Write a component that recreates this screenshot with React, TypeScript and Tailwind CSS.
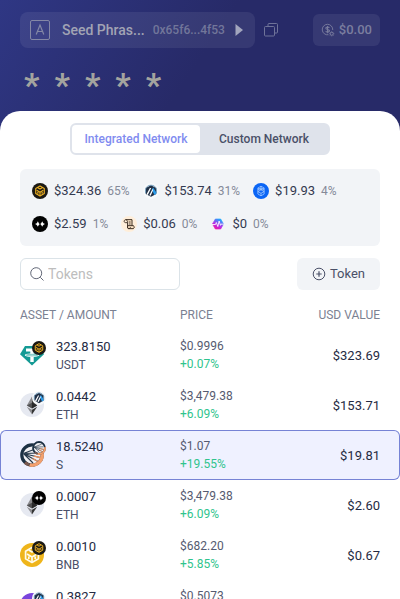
import { useState } from "react";
import type { ReactNode } from "react";
import clsx from "clsx";

type Chain = "bnb" | "arb" | "fantom" | "sonic" | "scroll" | "pulse";
type Coin = "usdt" | "eth" | "s" | "bnb" | "pol";

interface Token {
  amount: string;
  symbol: string;
  price: string;
  change: string;
  value: string;
  coin: Coin;
  chain: Chain | "s";
}

const networks: { chain: Chain; value: string; share: string }[] = [
  { chain: "bnb", value: "$324.36", share: "65%" },
  { chain: "arb", value: "$153.74", share: "31%" },
  { chain: "fantom", value: "$19.93", share: "4%" },
  { chain: "sonic", value: "$2.59", share: "1%" },
  { chain: "scroll", value: "$0.06", share: "0%" },
  { chain: "pulse", value: "$0", share: "0%" },
];

const tokens: Token[] = [
  { amount: "323.8150", symbol: "USDT", price: "$0.9996", change: "+0.07%", value: "$323.69", coin: "usdt", chain: "bnb" },
  { amount: "0.0442", symbol: "ETH", price: "$3,479.38", change: "+6.09%", value: "$153.71", coin: "eth", chain: "arb" },
  { amount: "18.5240", symbol: "S", price: "$1.07", change: "+19.55%", value: "$19.81", coin: "s", chain: "s" },
  { amount: "0.0007", symbol: "ETH", price: "$3,479.38", change: "+6.09%", value: "$2.60", coin: "eth", chain: "sonic" },
  { amount: "0.0010", symbol: "BNB", price: "$682.20", change: "+5.85%", value: "$0.67", coin: "bnb", chain: "bnb" },
  { amount: "0.3827", symbol: "POL", price: "$0.5073", change: "+4.12%", value: "$0.19", coin: "pol", chain: "arb" },
];

const BnbCube = () => (
  <g fill="none" strokeLinejoin="round" strokeWidth="1.7">
    <path d="M12 4.6 18.4 8.2v7.6L12 19.4 5.6 15.8V8.2z" />
    <path d="m8.8 7 3.2 1.9L15.2 7M7 11l5 3 5-3M12 13.8v5M8.8 16v-2.6M15.2 16v-2.6" />
  </g>
);

// Ring with spokes fanning out of its left side, shared by the S coin and its network badge
const SpokedRing = () => (
  <>
    <circle cx="12" cy="12" r="11" fill="#f1f0f3" />
    <circle cx="12" cy="12" r="10.200" fill="none" stroke="#1d3144" strokeWidth="3.200" />
    <path d="M22.100 10.500A10.200 10.200 0 0 1 9.500 21.900" fill="none" stroke="#f3a06e" strokeWidth="3.400" />
    <path d="M9 21.800A10.200 10.200 0 0 1 5 19.500" fill="none" stroke="#7b5a50" strokeWidth="3.200" />
    <path d="M3.500 10.500 20 14.500M3.500 10.500l14.500 8M3.500 10.500 13 20M3.500 10.500 19.500 10M3.500 10.500l13-5" fill="none" stroke="#26384a" strokeWidth="1.100" />
    <path d="M14 13.100 20 14.500M12.500 15.500l5.500 3" stroke="#e9925f" strokeWidth="1.400" />
  </>
);

const shapes: Record<Chain | Coin, ReactNode> = {
  usdt: (
    <>
      <path d="M5 3h14l5 8.200L12 22.500 0 11.200z" fill="#149a94" />
      <path d="M6 5.500h12v3h-4.300v2c3.200.2 5.500.9 5.500 1.700s-2.300 1.500-5.500 1.700V19h-3.400v-5.100c-3.200-.2-5.500-.9-5.500-1.700s2.300-1.500 5.500-1.700v-2H6z" fill="#fff" />
      <ellipse cx="12" cy="12.100" rx="5.700" ry=".8" fill="none" stroke="#149a94" strokeWidth=".6" />
    </>
  ),
  eth: (
    <>
      <circle cx="12" cy="12" r="12" fill="#e6e9f1" />
      <path d="M12 3.500v12L6.800 12.400z" fill="#8a8a8d" />
      <path d="M12 3.500v12l5.200-3.100z" fill="#343434" />
      <path d="m12 9.800 5.200 2.600L12 15.500l-5.200-3.100z" fill="#202023" opacity=".55" />
      <path d="M6.800 13.700 12 16.700v4.800z" fill="#8a8a8d" />
      <path d="M17.200 13.700 12 16.700v4.800z" fill="#343434" />
    </>
  ),
  s: <SpokedRing />,
  bnb: (
    <>
      <circle cx="12" cy="12" r="12" fill="#1b1914" />
      <g stroke="#eeb122"><BnbCube /></g>
    </>
  ),
  pol: (
    <>
      <circle cx="12" cy="12" r="12" fill="#7a45dc" />
      <path d="m8 9 4-2 4 2v5l-4 2-4-2z" fill="none" stroke="#fff" strokeWidth="1.800" />
    </>
  ),
  arb: (
    <>
      <circle cx="12" cy="12" r="12" fill="#f7f9fb" />
      <path d="M12 3.200 19.800 7.600v8.800L12 20.800l-7.800-4.400V7.600z" fill="#213147" />
      <path d="m13.200 10 2-3.300 4.600 7.300v2.600l-2.600 1.500z" fill="#2b9ceb" />
      <path d="M10.300 7.500h2L7.200 18l-2-1.200zM14.200 9l.9 1.900L11.500 19l-2-.8z" fill="#fff" />
      <path d="M3.900 15.500V9.500C4.500 5.500 8 3.300 12 3.300s7.500 2.200 8.100 6.200v6" fill="none" stroke="#5f91b5" strokeWidth="1.200" />
    </>
  ),
  fantom: (
    <>
      <circle cx="12" cy="12" r="12" fill="#0b65f5" />
      <path d="m12 4.800 4.700 2.700v9L12 19.200l-4.700-2.700v-9zM7.300 7.500l4.700 2.700 4.700-2.700M7.300 12.800l4.700-2.600 4.700 2.600-4.700 2.700zM12 4.800v5.400m0 5.300v3.700M7.300 10.200 12 7.500l4.700 2.700" fill="none" stroke="#b9d6ff" strokeWidth="1" strokeLinejoin="round" />
    </>
  ),
  sonic: (
    <>
      <circle cx="12" cy="12" r="12" fill="#020202" />
      <path d="M3.800 12c2.800-.5 4.200-1.700 5-4.200 1.100 2.500 1.700 3.700 3 4.200-1.300.7-1.900 1.700-3 4.200-.8-2.500-2.200-3.600-5-4.200zM20.200 12c-2.800-.5-3.900-1.700-5-4.200-.8 2.500-1.700 3.700-3.400 4.200 1.700.6 2.600 1.700 3.400 4.200 1.100-2.500 2.200-3.600 5-4.200z" fill="#fff" />
    </>
  ),
  scroll: (
    <>
      <circle cx="12" cy="12" r="12" fill="#ffeeda" />
      <path d="M7 5.500h9.500v9H9.800v2.200c0 2.300 1.300 2.300 2.200 2.300h6.500c1.800-1 1.800-3.600 0-4.500h-2" fill="#ffe6c8" stroke="#3d2e22" strokeWidth="1.500" strokeLinejoin="round" />
      <path d="M7 5.500c-3 .5-3 4.500 0 4.500h2.800v7c0 1.300 1 2 2.200 2s2.200-.8 2.200-2.200M7 5.500c1.600 0 2.800 1.200 2.800 4.500M11.500 9h3M11.500 12h3" fill="none" stroke="#3d2e22" strokeWidth="1.400" />
    </>
  ),
  pulse: (
    <>
      <defs>
        <linearGradient id="pulse" x1="0" y1="1" x2=".6" y2="0">
          <stop offset="0" stopColor="#ff0f8f" />
          <stop offset=".5" stopColor="#b62be8" />
          <stop offset="1" stopColor="#1fa8ff" />
        </linearGradient>
      </defs>
      <path d="M8 4.500h8l4.300 7.500-4.300 7.500H8L3.700 12z" fill="url(#pulse)" stroke="url(#pulse)" strokeLinejoin="round" />
      <path d="M3 12.800h5.200l1.300-3 2.200 6 2-8.300 2 6.500.9-1.800H21" fill="none" stroke="#fff" strokeWidth="1.300" />
    </>
  ),
};

const Glyph = ({ name, className }: { name: Chain | Coin; className: string }) => (
  <svg viewBox="0 0 24 24" className={className} aria-hidden="true">
    {shapes[name]}
  </svg>
);

const CoinIcon = ({ coin, chain }: { coin: Coin; chain: Chain | "s" }) => (
  <span className="relative block size-6 shrink-0">
    {coin === "bnb" ? (
      <svg viewBox="0 0 24 24" className="size-6" aria-hidden="true">
        <circle cx="12" cy="12" r="12" fill="#efb51b" />
        <g stroke="#fffbe9"><BnbCube /></g>
      </svg>
    ) : (
      <Glyph name={coin} className="size-6" />
    )}
    <Glyph name={chain} className="absolute -right-0.5 -top-0.5 size-3.5" />
  </span>
);

const tabs = ["Integrated Network", "Custom Network"];

export default function App() {
  const [tab, setTab] = useState(tabs[0]);
  const [search, setSearch] = useState("");
  const [selected, setSelected] = useState(2);

  const visible = tokens.filter((t) => t.symbol.toLowerCase().includes(search.toLowerCase()));

  return (
    <div className="flex h-screen flex-col overflow-hidden bg-linear-to-br from-[#2f3784] to-[#272a68] to-30% font-[Roboto,sans-serif]">
      {/* Account header */}
      <header className="px-5 pt-3">
        <div className="flex items-center">
          <button className="flex h-9 items-center rounded-lg bg-white/7 pl-2.5 pr-3">
            <svg viewBox="0 0 20 20" className="size-5" fill="none" stroke="#8488a6" aria-hidden="true">
              <rect x="0.500" y="0.500" width="19" height="19" rx="1.500" />
              <path d="m6.200 14.500 3.800-9.500 3.800 9.500M7.500 11.500h5" strokeWidth="1.200" />
            </svg>
            <span className="ml-3 text-sm font-medium text-[#a2a4b4]">Seed Phras...</span>
            <span className="ml-2 text-xs font-medium text-[#72769a]">0x65f6...4f53</span>
            <svg viewBox="0 0 8 12" className="ml-2.5 h-3 w-2" aria-hidden="true">
              <path d="M0.500 0 8 6l-7.500 6z" fill="#a2a5bd" />
            </svg>
          </button>
          <button aria-label="Copy address" className="ml-2 p-px">
            <svg viewBox="0 0 14 14" className="size-3.5" fill="none" stroke="#6f7399" aria-hidden="true">
              <rect x="0.500" y="3.500" width="10" height="9.500" rx="1" />
              <path d="M4 3.500V1.500a1 1 0 0 1 1-1h7.500a1 1 0 0 1 1 1V9a1 1 0 0 1-1 1h-2" />
            </svg>
          </button>
          <button className="ml-auto flex h-8 items-center gap-1 rounded-md bg-white/7 px-2 text-[#7b7e9f]">
            <svg viewBox="0 0 16 16" className="size-3.5" fill="none" stroke="currentColor" aria-hidden="true">
              <path d="M8.500 13.400A6 6 0 1 1 13.400 8" />
              <path d="M9.600 5.600C9.300 4.900 8.500 4.600 7.500 4.600c-1.200 0-2 .6-2 1.400 0 2 4.200.9 4.200 3 0 .9-.9 1.500-2.100 1.500-1.100 0-1.900-.4-2.200-1.200M7.500 3.400v8.300" strokeWidth="1.200" />
              <circle cx="12.300" cy="12.300" r="1.700" />
              <path d="M12.300 9.500v1M12.300 14.200v1M9.500 12.300h1M14.200 12.300h1M10.400 10.400l.6.6M13.600 13.600l.6.6M14.200 10.400l-.6.6M11 13.600l-.6.6" />
            </svg>
            <span className="text-[13px] font-medium">$0.00</span>
          </button>
        </div>
        <div className="mt-3 flex h-[51px] items-start gap-[15px] pl-1 text-[34px] font-bold leading-[51px] text-[#a4a49f]">
          {[0, 1, 2, 3, 4].map((i) => (
            <span key={i}>*</span>
          ))}
        </div>
      </header>

      <main className="min-h-0 flex-1 overflow-hidden rounded-t-[20px] bg-white pt-3">
        <div className="mx-auto flex h-8 w-[260px] rounded-md border-2 border-[#dfe3eb] bg-[#dfe3eb]">
          {tabs.map((t) => (
            <button
              key={t}
              onClick={() => setTab(t)}
              className={clsx(
                "flex-1 whitespace-nowrap rounded text-xs font-medium",
                tab === t ? "bg-white text-[#818cf0]" : "text-[#4a5068]"
              )}
            >
              {t}
            </button>
          ))}
        </div>

        {/* Network totals */}
        <div className="mx-5 mt-3.5 flex flex-wrap gap-x-[13px] gap-y-[17px] rounded-md bg-[#f2f4f7] px-3 py-3.5">
          {networks.map((n) => (
            <div key={n.chain} className="flex h-4 items-center">
              <Glyph name={n.chain} className="size-4" />
              <span className="ml-1.5 text-[13px] text-[#343a50]">{n.value}</span>
              <span className="ml-1.5 text-xs text-[#858a99]">{n.share}</span>
            </div>
          ))}
        </div>

        <div className="mx-5 mt-3 flex items-center justify-between">
          <label className="flex h-8 w-40 items-center rounded-md border border-[#dbe3e8] pl-[9px]">
            <svg viewBox="0 0 14 14" className="size-3.5 shrink-0" fill="none" stroke="#636878" aria-hidden="true">
              <circle cx="6.200" cy="6.200" r="5.500" />
              <path d="m10.300 10.300 3.200 3.200" />
            </svg>
            <input
              aria-label="Search tokens"
              value={search}
              onChange={(e) => setSearch(e.target.value)}
              placeholder="Tokens"
              className="ml-1 w-full min-w-0 bg-transparent text-sm text-[#343a50] outline-none placeholder:text-[#bdbdbd]"
            />
          </label>
          <button className="flex h-8 items-center gap-1 rounded-md bg-[#f2f4f7] px-[15px] text-[13px] text-[#4a5068]">
            <svg viewBox="0 0 14 14" className="size-3.5" fill="none" stroke="currentColor" aria-hidden="true">
              <circle cx="7" cy="7" r="5.800" />
              <path d="M7 4.300v5.400M4.300 7h5.400" strokeWidth="1.200" />
            </svg>
            Token
          </button>
        </div>

        <table className="mt-2.5 w-full table-fixed border-separate border-spacing-0 text-left">
          <thead>
            <tr className="h-[30px] text-xs text-[#7b8192]">
              <th className="w-[45%] pl-5 font-normal">ASSET / AMOUNT</th>
              <th className="w-[25%] font-normal">PRICE</th>
              <th className="pr-5 text-right font-normal">USD VALUE</th>
            </tr>
          </thead>
          <tbody>
            {visible.map((t, i) => {
              const cell = clsx("border-y p-0", selected === i ? "border-[#7683d5] bg-[#eff1ff]" : "border-transparent");
              return (
                <tr key={t.amount} onClick={() => setSelected(i)} className="h-[50px] cursor-pointer">
                  <td className={clsx(cell, "rounded-l-md border-l")}>
                    <div className="flex items-center gap-3 pl-[19px]">
                      <CoinIcon coin={t.coin} chain={t.chain} />
                      <div className="pt-0.5">
                        <p className="text-[13px] leading-[18px] text-[#252b43]">{t.amount}</p>
                        <p className="text-xs leading-[18px] text-[#4a5068]">{t.symbol}</p>
                      </div>
                    </div>
                  </td>
                  <td className={cell}>
                    <p className="text-xs leading-[18px] text-[#555b70]">{t.price}</p>
                    <p className="text-xs leading-[18px] text-[#2fc48d]">{t.change}</p>
                  </td>
                  <td className={clsx(cell, "rounded-r-md border-r text-right")}>
                    <span className="pr-[19px] text-[13px] text-[#252b43]">{t.value}</span>
                  </td>
                </tr>
              );
            })}
          </tbody>
        </table>
      </main>
    </div>
  );
}
